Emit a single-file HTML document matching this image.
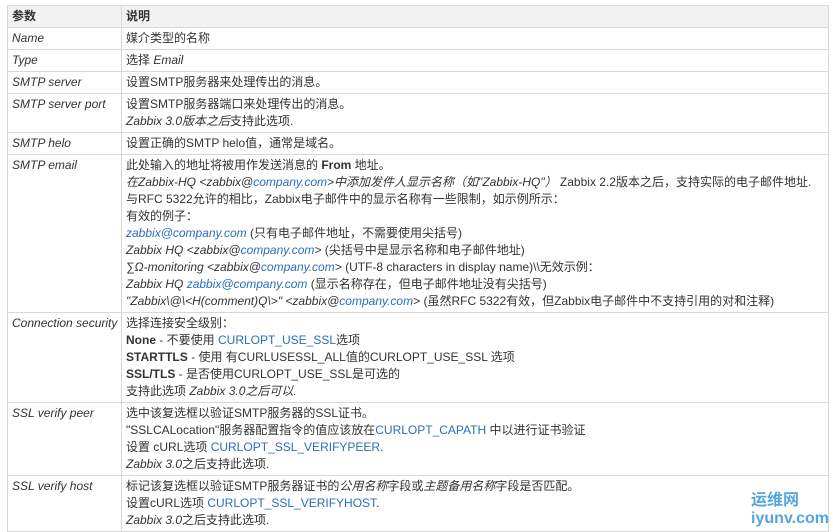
<!DOCTYPE html>
<html><head><meta charset="utf-8"><style>
body{margin:0;background:#fff;width:833px;height:530px;overflow:hidden;font-family:"Liberation Sans","Noto Sans CJK SC",sans-serif;font-size:12px;color:#333;}
table{position:absolute;left:7px;top:5px;border-collapse:collapse;width:822px;}
td,th{border:1px solid #d8d8d8;padding:2px 3px 2px 4px;vertical-align:top;line-height:17px;text-align:left;}
th{background:#f2f2f2;font-weight:bold;height:17px;}
td.k{width:106px;font-style:italic;}
a{color:#2a6ebb;text-decoration:none}
i{font-style:italic}
.wm{position:absolute;right:4px;bottom:2px;color:#2a8fd6;font-weight:bold;font-size:16px;opacity:.8;line-height:18px}
</style></head><body>
<table>
<tr><th style="width:106px">参数</th><th>说明</th></tr>
<tr><td class="k">Name</td><td>媒介类型的名称</td></tr>
<tr><td class="k">Type</td><td>选择 <i>Email</i></td></tr>
<tr><td class="k">SMTP server</td><td>设置SMTP服务器来处理传出的消息。</td></tr>
<tr><td class="k">SMTP server port</td><td>设置SMTP服务器端口来处理传出的消息。<br><i>Zabbix 3.0版本之后</i>支持此选项.</td></tr>
<tr><td class="k">SMTP helo</td><td>设置正确的SMTP helo值，通常是域名。</td></tr>
<tr><td class="k">SMTP email</td><td>此处输入的地址将被用作发送消息的 <b>From</b> 地址。<br><i>在Zabbix-HQ &lt;zabbix@<a>company.com</a>&gt;中添加发件人显示名称（如"Zabbix-HQ"）</i> Zabbix 2.2版本之后，支持实际的电子邮件地址.<br>与RFC 5322允许的相比，Zabbix电子邮件中的显示名称有一些限制，如示例所示：<br>有效的例子：<br><a><i>zabbix@company.com</i></a> (只有电子邮件地址，不需要使用尖括号)<br><i>Zabbix HQ &lt;zabbix@<a>company.com</a>&gt;</i> (尖括号中是显示名称和电子邮件地址)<br><i>∑Ω-monitoring &lt;zabbix@<a>company.com</a>&gt;</i> (UTF-8 characters in display name)\\无效示例：<br><i>Zabbix HQ <a>zabbix@company.com</a></i> (显示名称存在，但电子邮件地址没有尖括号)<br><i>"Zabbix\@\&lt;H(comment)Q\&gt;" &lt;zabbix@<a>company.com</a>&gt;</i> (虽然RFC 5322有效，但Zabbix电子邮件中不支持引用的对和注释)</td></tr>
<tr><td class="k">Connection security</td><td>选择连接安全级别：<br><b>None</b> - 不要使用 <a>CURLOPT_USE_SSL</a>选项<br><b>STARTTLS</b> - 使用 有CURLUSESSL_ALL值的CURLOPT_USE_SSL 选项<br><b>SSL/TLS</b> - 是否使用CURLOPT_USE_SSL是可选的<br>支持此选项 <i>Zabbix 3.0之后可以.</i></td></tr>
<tr><td class="k">SSL verify peer</td><td>选中该复选框以验证SMTP服务器的SSL证书。<br>"SSLCALocation"服务器配置指令的值应该放在<a>CURLOPT_CAPATH</a> 中以进行证书验证<br>设置 cURL选项 <a>CURLOPT_SSL_VERIFYPEER</a>.<br><i>Zabbix 3.0</i>之后支持此选项.</td></tr>
<tr><td class="k">SSL verify host</td><td>标记该复选框以验证SMTP服务器证书的<i>公用名称</i>字段或<i>主题备用名称</i>字段是否匹配。<br>设置cURL选项 <a>CURLOPT_SSL_VERIFYHOST</a>.<br><i>Zabbix 3.0</i>之后支持此选项.</td></tr>
</table>
<div class="wm">运维网<br>iyunv.com</div>
</body></html>
